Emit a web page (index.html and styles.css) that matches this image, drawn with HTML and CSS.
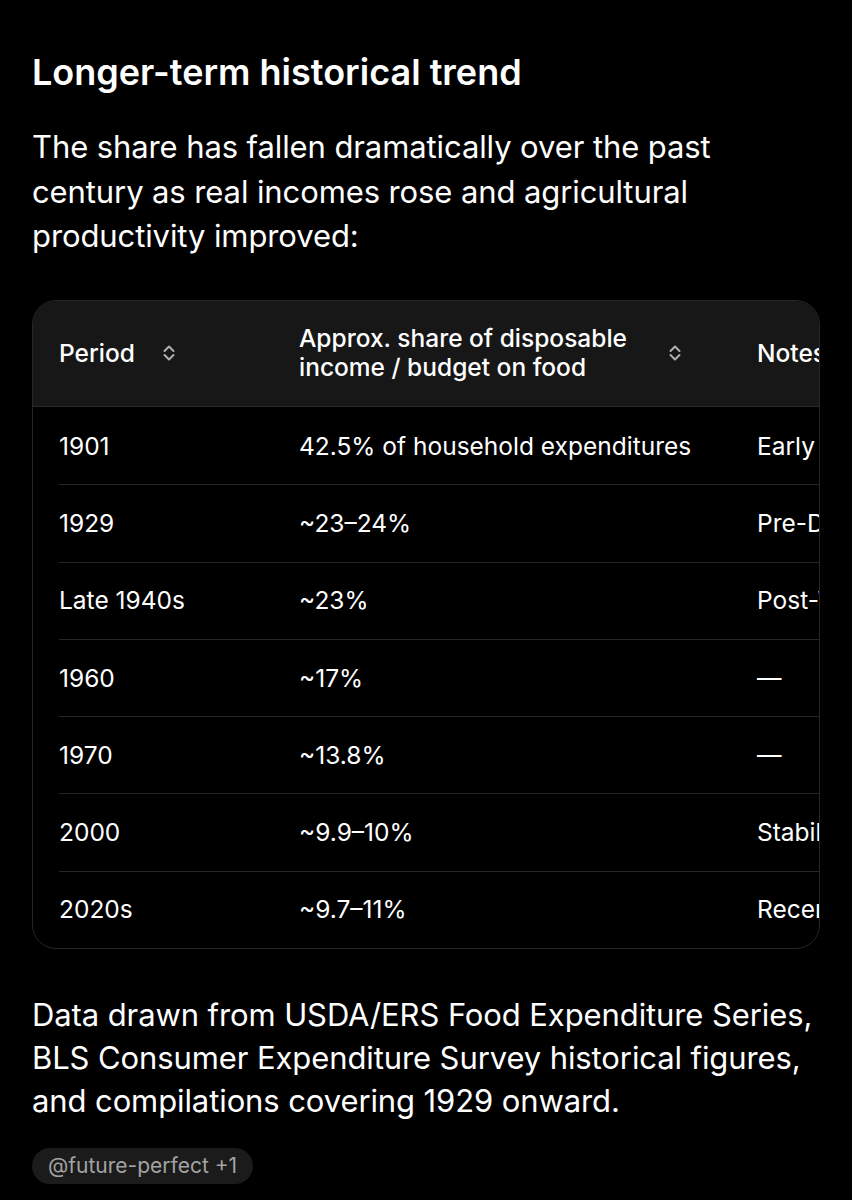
FILE: index.html
```html
<!DOCTYPE html>
<html lang="en">
<head>
<meta charset="utf-8">
<link rel="stylesheet" href="styles.css">
</head>
<body>
<main class="page">
  <h2 class="title">Longer-term historical trend</h2>
  <p class="lead">The share has fallen dramatically over the past century as real incomes rose and agricultural productivity improved:</p>
  <div class="table-wrap">
    <table class="data">
      <colgroup><col class="w1"><col class="w2"><col class="w3"></colgroup>
      <thead>
        <tr>
          <th><div class="th-in"><span>Period</span><svg class="sort" viewBox="0 0 14 20" width="14" height="20"><path d="M2.5 8 L7 3.5 L11.5 8 M2.5 12 L7 16.5 L11.5 12" fill="none" stroke="currentColor" stroke-width="2" stroke-linecap="round" stroke-linejoin="round"/></svg></div></th>
          <th><div class="th-in wide"><span class="lbl">Approx. share of disposable income / budget on food</span><svg class="sort" viewBox="0 0 14 20" width="14" height="20"><path d="M2.5 8 L7 3.5 L11.5 8 M2.5 12 L7 16.5 L11.5 12" fill="none" stroke="currentColor" stroke-width="2" stroke-linecap="round" stroke-linejoin="round"/></svg></div></th>
          <th><div class="th-in"><span>Notes</span></div></th>
        </tr>
      </thead>
      <tbody>
        <tr><td class="c1">1901</td><td>42.5% of household expenditures</td><td>Early 20th-century baseline</td></tr>
        <tr><td class="c1">1929</td><td>~23–24%</td><td>Pre-Depression</td></tr>
        <tr><td class="c1">Late 1940s</td><td>~23%</td><td>Post-War</td></tr>
        <tr><td class="c1">1960</td><td>~17%</td><td>—</td></tr>
        <tr><td class="c1">1970</td><td>~13.8%</td><td>—</td></tr>
        <tr><td class="c1">2000</td><td>~9.9–10%</td><td>Stabilizing</td></tr>
        <tr><td class="c1">2020s</td><td>~9.7–11%</td><td>Recent estimates</td></tr>
      </tbody>
    </table>
  </div>
  <p class="lead foot">Data drawn from USDA/ERS Food Expenditure Series, BLS Consumer Expenditure Survey historical figures, and compilations covering 1929 onward.</p>
  <span class="pill">@future-perfect +1</span>
</main>
</body>
</html>
```

FILE: styles.css
```css
html, body {
  margin: 0;
  padding: 0;
  background: #000;
}
body {
  font-family: Inter, "Noto Sans", "Liberation Sans", sans-serif;
  color: #fff;
  width: 852px;
  height: 1200px;
  overflow: hidden;
}
.page {
  padding: 50px 32px 0 32px;
}
.title {
  margin: 0;
  font-size: 36px;
  font-weight: 600;
  letter-spacing: 0;
  line-height: 44px;
}
.lead {
  margin: 31px 0 0 0;
  font-size: 31px;
  line-height: 44.5px;
  font-weight: 400;
  letter-spacing: -0.1px;
}
.table-wrap {
  margin-top: 41px;
  width: 786px;
  border: 1px solid #262626;
  border-radius: 24px;
  overflow: hidden;
}
.data {
  border-collapse: collapse;
  table-layout: fixed;
  width: 1100px;
  font-size: 24.5px;
}
.w1 { width: 240px; }
.w2 { width: 458px; }
.w3 { width: 402px; }
.data thead tr {
  background: #171717;
  height: 106px;
  border-bottom: 1px solid #2a2a2a;
}
.data th {
  text-align: left;
  font-weight: 500;
  line-height: 29px;
  padding: 0 26px;
  vertical-align: middle;
  white-space: nowrap;
}
.th-in {
  display: flex;
  align-items: center;
  gap: 27px;
}
.th-in.wide {
  justify-content: space-between;
  padding-right: 23px;
}
.lbl {
  white-space: normal;
  width: 345px;
}
.sort {
  color: #b0b0b0;
  flex: none;
}
.data td {
  height: 77.3px;
  padding: 0 26px;
  vertical-align: middle;
  font-weight: 400;
  white-space: nowrap;
  overflow: hidden;
  background-image: linear-gradient(#262626, #262626);
  background-size: 100% 1px;
  background-repeat: no-repeat;
  background-position: 0 0;
}
.data td.c1 {
  background-position: 26px 0;
}
.data tbody tr:first-child td {
  background-image: none;
}
.foot {
  margin-top: 44px;
  line-height: 43px;
}
.pill {
  display: inline-block;
  margin-top: 26px;
  background: #1b1b1b;
  color: #a3a3a3;
  font-size: 21px;
  line-height: 36px;
  padding: 0 16px;
  border-radius: 18px;
}
```
